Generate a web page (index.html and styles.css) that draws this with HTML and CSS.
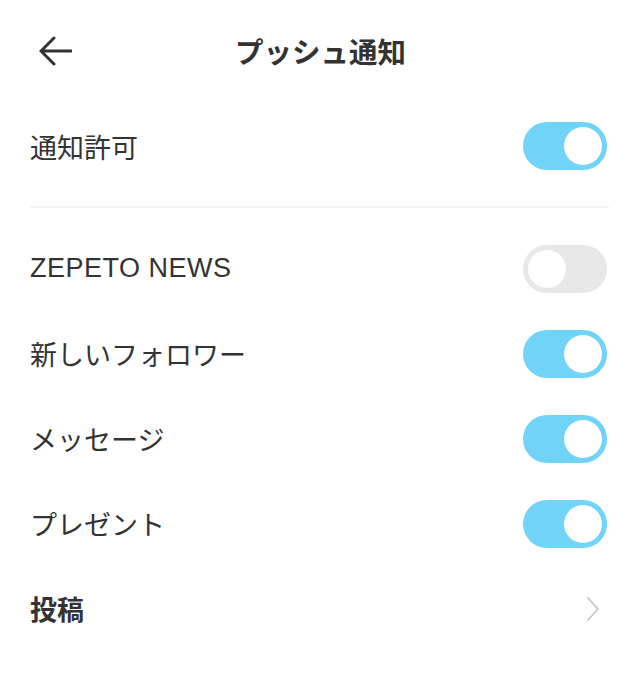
FILE: index.html
```html
<!DOCTYPE html>
<html lang="ja">
<head>
    <meta charset="UTF-8">
    <meta name="viewport" content="width=device-width, initial-scale=1.0">
    <title>プッシュ通知</title>
    <link rel="stylesheet" href="styles.css">
</head>
<body>
    <div class="header">
        <div class="back">
            <svg width="34" height="32" viewBox="0 0 34 32">
                <path d="M33 16H3M16 3L3 16l13 13" fill="none" stroke="#333" stroke-width="3" stroke-linecap="round" stroke-linejoin="round"/>
            </svg>
        </div>
        <h1>プッシュ通知</h1>
    </div>

    <div class="row main-row">
        <span class="label">通知許可</span>
        <div class="toggle on"><div class="knob"></div></div>
    </div>

    <div class="divider"></div>

    <div class="list">
        <div class="row">
            <span class="label latin">ZEPETO NEWS</span>
            <div class="toggle"><div class="knob"></div></div>
        </div>
        <div class="row">
            <span class="label">新しいフォロワー</span>
            <div class="toggle on"><div class="knob"></div></div>
        </div>
        <div class="row">
            <span class="label">メッセージ</span>
            <div class="toggle on"><div class="knob"></div></div>
        </div>
        <div class="row">
            <span class="label">プレゼント</span>
            <div class="toggle on"><div class="knob"></div></div>
        </div>
        <div class="row">
            <span class="label bold">投稿</span>
            <svg class="chevron" width="14" height="26" viewBox="0 0 14 26">
                <path d="M2 2l10 11L2 24" fill="none" stroke="#c6c6c6" stroke-width="1.8" stroke-linecap="round" stroke-linejoin="round"/>
            </svg>
        </div>
    </div>
</body>
</html>
```

FILE: styles.css
```css
body {
    margin: 0;
    background: #fff;
    color: #333;
    font-family: "Liberation Sans", "Noto Sans CJK JP", sans-serif;
}

.header {
    height: 100px;
    display: flex;
    align-items: center;
    justify-content: center;
    position: relative;
}

.back {
    position: absolute;
    left: 38px;
    top: 35px;
    display: flex;
}

.header h1 {
    margin: 0;
    font-size: 28.5px;
    font-weight: bold;
    color: #333;
    padding-left: 2px;
}

.row {
    display: flex;
    align-items: center;
    justify-content: space-between;
    height: 85px;
    padding: 0 32px 0 30px;
}

.main-row {
    height: 92px;
}

.label {
    font-size: 27px;
}

.label.latin {
    letter-spacing: 0.5px;
}

.label.bold {
    font-weight: bold;
}

.divider {
    height: 2px;
    background: #f3f3f3;
    margin: 14px 30px 0 30px;
}

.list {
    padding-top: 18px;
}

.toggle {
    width: 84px;
    height: 48px;
    border-radius: 24px;
    background: #e8e8e8;
    display: flex;
    align-items: center;
    padding: 0 5px;
    box-sizing: border-box;
}

.toggle.on {
    background: #6fd4f8;
    justify-content: flex-end;
}

.knob {
    width: 38px;
    height: 38px;
    border-radius: 50%;
    background: #fff;
}

.chevron {
    margin-right: 7px;
}
```
